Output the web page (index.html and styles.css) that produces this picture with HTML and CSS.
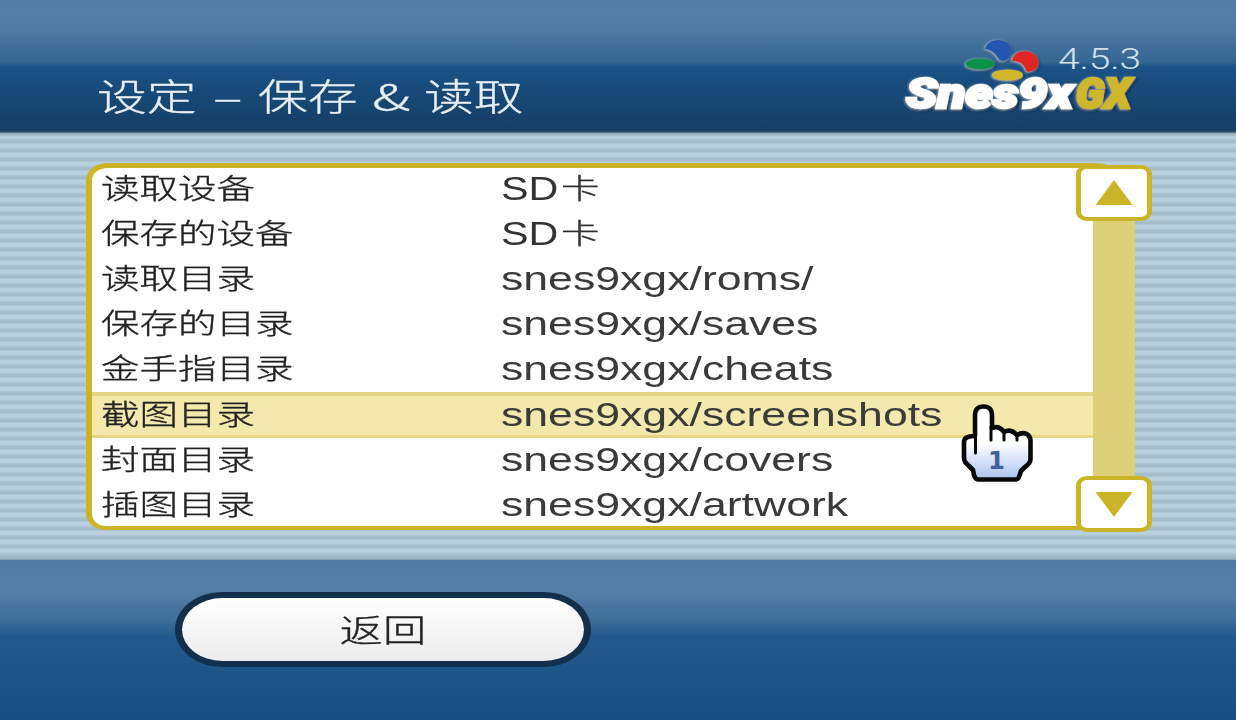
FILE: index.html
```html
<!DOCTYPE html>
<html lang="zh-CN">
<head>
<meta charset="utf-8">
<title>Snes9xGX</title>
<link rel="stylesheet" href="styles.css">
</head>
<body>
<div class="screen">
  <header class="bar header">
    <h1 class="title"><span class="t1">设定</span><span class="t2">–</span><span class="t3">保存</span><span class="t4">&amp;</span><span class="t5">读取</span></h1>
    <svg class="logo" width="270" height="90" viewBox="890 30 270 90">
      <defs>
        <filter id="glow" x="-20%" y="-20%" width="140%" height="150%">
          <feDropShadow dx="-1" dy="0.5" stdDeviation=".8" flood-color="#d8e4ee" flood-opacity=".5"/>
          <feDropShadow dx="1.5" dy="1.5" stdDeviation="1.2" flood-color="#0b2440" flood-opacity=".8"/>
        </filter>
        <filter id="bevel" x="-20%" y="-20%" width="140%" height="150%">
          <feDropShadow dx="-1" dy="0.5" stdDeviation="1" flood-color="#d8e4ee" flood-opacity=".65"/>
          <feDropShadow dx="1" dy="1" stdDeviation=".8" flood-color="#0b2440" flood-opacity=".8"/>
        </filter>
      </defs>
      <g filter="url(#bevel)">
        <path d="M985 48.500C987 42 993 40 999 40C1007 40 1012 45 1012 51C1012 56 1009 60 1003 61C1000 61 999 60 998 58C995 53 991 50 985 49Z" fill="#2457b0"/>
        <path d="M1012 60.500C1013 54 1019 51 1025 51C1033 51 1038.500 57 1038.500 63C1038.500 68 1034 71 1029 72C1026 72 1026 70 1025 68C1022 63 1018 61 1012 61Z" fill="#df2822"/>
        <ellipse cx="980" cy="64" rx="14.500" ry="5.700" fill="#0f9048"/>
        <ellipse cx="1007.500" cy="75" rx="15.500" ry="5.600" fill="#cfb62c"/>
      </g>
      <g filter="url(#glow)" class="wordmark">
        <text x="906" y="108" textLength="167" lengthAdjust="spacingAndGlyphs" fill="#fff" stroke="#fff">Snes9x</text>
        <text x="1076" y="108" textLength="55" lengthAdjust="spacingAndGlyphs" fill="#cfb62c" stroke="#cfb62c">GX</text>
      </g>
      <text class="version" x="1058" y="69" textLength="83" lengthAdjust="spacingAndGlyphs">4.5.3</text>
    </svg>
  </header>

  <main class="content">
    <div class="panel">
      <div class="row"><span class="name">读取设备</span><span class="device"><span class="latin">SD</span><span class="han">卡</span></span></div>
      <div class="row"><span class="name">保存的设备</span><span class="device"><span class="latin">SD</span><span class="han">卡</span></span></div>
      <div class="row"><span class="name">读取目录</span><span class="value">snes9xgx/roms/</span></div>
      <div class="row"><span class="name">保存的目录</span><span class="value">snes9xgx/saves</span></div>
      <div class="row"><span class="name">金手指目录</span><span class="value">snes9xgx/cheats</span></div>
      <div class="row selected"><span class="name">截图目录</span><span class="value">snes9xgx/screenshots</span></div>
      <div class="row"><span class="name">封面目录</span><span class="value">snes9xgx/covers</span></div>
      <div class="row"><span class="name">插图目录</span><span class="value">snes9xgx/artwork</span></div>
    </div>
    <div class="scroll">
      <div class="arrow"><svg width="38" height="26" viewBox="0 0 38 26"><path d="M19 0L37.500 25H.5Z" fill="#ccb429"/></svg></div>
      <div class="track"></div>
      <div class="arrow"><svg width="38" height="26" viewBox="0 0 38 26"><path d="M19 26L37.500 1H.5Z" fill="#ccb429"/></svg></div>
    </div>
  </main>

  <footer class="bar footer">
    <div class="back"><span>返回</span></div>
  </footer>

  <svg class="cursor" width="76" height="82" viewBox="958 402 76 82">
    <defs><linearGradient id="hand" x1="0" y1="0" x2="0" y2="1"><stop offset=".5" stop-color="#fff"/><stop offset="1" stop-color="#a9c3f1"/></linearGradient></defs>
    <path d="M975 436V416C975 409 978 406.500 983.500 406.500C989 406.500 992 409 992 416V428C997 426 1001 428 1004 432C1009 429 1013 431 1017 435C1024 431 1030.500 434 1030.500 441V459C1030.500 463 1028 465 1025 467L1021 471L1019 477Q1018 479.500 1015 479.500H979Q975 479.500 974 475L973 470L966 463Q964 461 964 457V442C964 438 968 436 975 436Z" fill="url(#hand)" stroke="#080808" stroke-width="4.600" stroke-linejoin="round"/>
    <path d="M975.500 434V453M991 427V440M1004 431V440M1017 434V440" fill="none" stroke="#080808" stroke-width="3" stroke-linecap="round"/>
    <text x="988" y="469" textLength="17" lengthAdjust="spacingAndGlyphs" class="player">1</text>
  </svg>
</div>
</body>
</html>
```
FILE: styles.css
```css
body { margin: 0; }

.screen {
  position: relative;
  display: flex;
  flex-direction: column;
  width: 1236px;
  height: 720px;
  overflow: hidden;
  font-family: "Liberation Sans", "Noto Sans CJK SC", sans-serif;
  color: #222;
}

.bar { box-sizing: border-box; flex: none; }

.header {
  display: flex;
  justify-content: space-between;
  height: 133px;
  padding: 30px 76px 0 97px;
  background: linear-gradient(#507da5 0, #547ea4 15px, #4f7aa2 32px, #3f6e99 48px, #336692 62px, #1b5288 67px, #174a79 90px, #153e63 131px, #6a8193 133px);
}

.title {
  display: flex;
  margin: 36px 0 0;
  height: 58px;
  font: 300 37px/58px "Noto Sans CJK SC", sans-serif;
  color: #e8eef4;
  white-space: pre;
  -webkit-text-stroke: .3px #e8eef4;
}
.title span { flex: none; transform: scaleX(1.345); transform-origin: 0 50%; }
.title .t2 { transform: scaleX(1.5); }
.title .t4 { transform: scaleX(1.6); }
.t1 { width: 116px; }
.t2 { width: 45px; }
.t3 { width: 114px; }
.t4 { width: 52px; }
.t5 { width: 100px; }

.wordmark { font: italic 900 42px Roboto, sans-serif; stroke-width: 2.6px; }
.version { font: 300 30px Roboto, sans-serif; fill: #d4e0ea; }

.content {
  display: flex;
  box-sizing: border-box;
  flex: none;
  height: 427px;
  padding: 30px 0 0 86px;
  background:
    linear-gradient(#8fa4b2 0, transparent 4px, transparent 423px, #849cad 427px),
    repeating-linear-gradient(#b9d0df 0, #b9d0df 3px, #a5bccb 6px, #a5bccb 8px, #b9d0df 9px);
  background-position: 0 0, 0 2px;
}

.panel {
  box-sizing: border-box;
  width: 1029px;
  height: 367px;
  border: solid #ccb429;
  border-width: 5px 0 4px 6px;
  border-radius: 22px 22px 0 20px / 17px 8px 0 16px;
  background: #fff;
}
.row {
  display: flex;
  box-sizing: border-box;
  height: 45.1px;
  padding-left: 9px;
  font-size: 33px;
  line-height: 42px;
  white-space: nowrap;
}
.name, .value, .latin, .han { flex: none; transform-origin: 0 50%; }
.name, .han {
  font-family: "Noto Sans CJK SC", sans-serif;
  font-weight: 300;
  font-size: 28.5px;
  line-height: 38px;
  transform: scaleX(1.35);
  -webkit-text-stroke: .35px #222;
}
.name { width: 400px; }
.value { transform: scaleX(1.352); color: #3a3a3a; }
.device { display: flex; color: #333; }
.latin { width: 60px; transform: scaleX(1.25); }
.selected {
  height: 46px;
  margin: -1.5px 0 .6px;
  border: solid #e2d584;
  border-width: 4px 0 3px;
  background: #f4e9ad;
}
.selected .name { line-height: 33px; }
.selected .value { line-height: 37px; }

.scroll {
  display: flex;
  flex-direction: column;
  align-items: center;
  width: 76px;
  height: 367px;
  margin: 2px 0 0 -39px;
}
.arrow {
  display: flex;
  align-items: center;
  justify-content: center;
  box-sizing: border-box;
  flex: none;
  width: 76px;
  height: 56px;
  border: solid #ccb429;
  border-width: 4px 5px;
  border-radius: 11px / 9px;
  background: #fff;
}
.track { flex: 1; width: 42px; background: #decf79; }

.footer {
  flex: 1;
  padding: 32px 0 0 175px;
  background: linear-gradient(#4f7ba3 0, #547ea4 25px, #507ba3 38px, #3d6d9a 60px, #22598e 77px, #1e568a 105px, #184d7f 160px);
}
.back {
  display: flex;
  align-items: center;
  justify-content: center;
  box-sizing: border-box;
  width: 416px;
  height: 75px;
  padding-bottom: 4px;
  border: solid #122f4b;
  border-width: 6px 7px;
  border-radius: 48px / 38px;
  background: linear-gradient(#fff, #ececec);
}
.back span {
  font: 300 32px/50px "Noto Sans CJK SC", sans-serif;
  transform: scaleX(1.35);
  -webkit-text-stroke: .35px #222;
}

.cursor { position: absolute; left: 958px; top: 402px; }
.player { font: bold 25px "DejaVu Sans", sans-serif; fill: #415f9c; }
```
